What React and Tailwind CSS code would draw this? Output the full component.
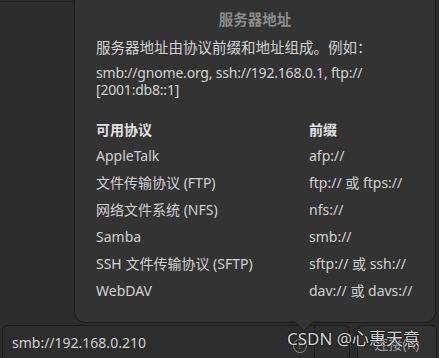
import React from "react";

const rows = [
  ["AppleTalk", "afp://"],
  ["文件传输协议 (FTP)", "ftp:// 或 ftps://"],
  ["网络文件系统 (NFS)", "nfs://"],
  ["Samba", "smb://"],
  ["SSH 文件传输协议 (SFTP)", "sftp:// 或 ssh://"],
  ["WebDAV", "dav:// 或 davs://"],
];

export default function App() {
  return (
    <div
      className="relative w-[439px] h-[358px] overflow-hidden bg-[#2c2c2c] text-[#d2d2d2]"
      style={{ fontFamily: '"Noto Sans", "Noto Sans CJK SC", sans-serif' }}
    >
      <div className="h-[2px] border-b border-[#232323] w-[74px]" />
      {/* bottom bar */}
      <div className="absolute left-0 right-0 top-[325px] h-[40px] flex">
        <div className="ml-[2px] w-[313px] h-full border border-[#1c1c1c] rounded-tl-[6px] bg-[#2d2d2d] flex items-start pt-[6px] pl-[9px] text-[14px] relative">
          smb://192.168.0.210
          <div className="absolute left-[290px] top-[13px] w-[14px] h-[14px] rounded-full border border-[#8a8a8a] text-[9px] leading-[12px] text-center text-[#8a8a8a]">?</div>
        </div>
        <div className="w-[35px] h-full border border-l-0 border-[#1c1c1c] rounded-tr-[6px] bg-[#2f2f2f]" />
        <div className="ml-[7px] w-[80px] h-full border border-[#1c1c1c] rounded-t-[6px] bg-[#323232] flex justify-center pt-[7px] text-[14px] text-[#a0a0a0]">
          连接(R)
        </div>
      </div>
      {/* popover */}
      <div className="absolute left-[74px] top-[-12px] w-[362px] h-[335px] bg-[#333333] border border-[#1b1b1b] rounded-b-[11px]">
        <div className="pt-[20px] text-center text-[14.5px] font-bold text-[#8c8c8c] leading-[20px]">服务器地址</div>
        <div className="pl-[21px] pr-[10px]">
          <div className="mt-[8px] text-[14.5px] leading-[20px]">服务器地址由协议前缀和地址组成。例如：</div>
          <div className="mt-[7px] text-[14px] leading-[17px] tracking-[-0.2px]">
            smb://gnome.org, ssh://192.168.0.1, ftp://
            <br />[2001:db8::1]
          </div>
          <div className="mt-[21px] grid grid-cols-[213px_1fr] text-[14px]">
            <div className="font-bold text-[#e2e2e2] h-[25.5px] leading-[22px]">可用协议</div>
            <div className="font-bold text-[#e2e2e2] h-[25.5px] leading-[22px]">前缀</div>
            {rows.map(([a, b]) => (
              <React.Fragment key={a}>
                <div className="h-[27.2px] leading-[22px]">{a}</div>
                <div className="h-[27.2px] leading-[22px]">{b}</div>
              </React.Fragment>
            ))}
          </div>
        </div>
      </div>
      {/* arrow */}
      <svg className="absolute left-[290px] top-[321px]" width="30" height="12" viewBox="0 0 30 12">
        <path d="M0 1 L5 1 L14 10 L23 1 L30 1" fill="#333333" stroke="#1b1b1b" strokeWidth="1" />
        <path d="M4 0 L5 0.5 L14 9.5 L23 0.5 L26 0 Z" fill="#333333" />
      </svg>
      {/* watermark */}
      <div
        className="absolute left-[287px] top-[328px] text-[17px] leading-[22px] text-[#f0f0f0]/90"
        style={{ textShadow: "0 0 2px #000, 0 0 1px #000" }}
      >
        CSDN @心惠天意
      </div>
    </div>
  );
}
